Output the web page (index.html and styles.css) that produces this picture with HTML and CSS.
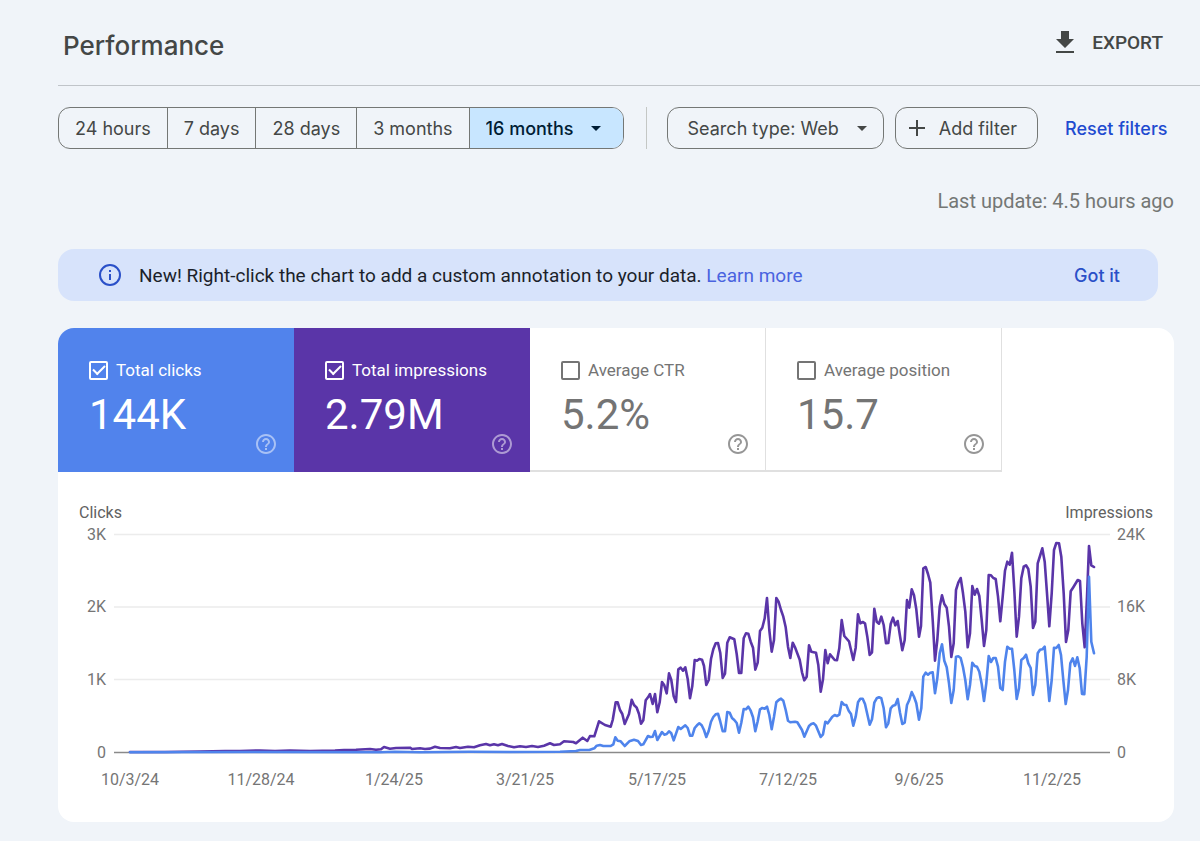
FILE: index.html
```html
<!DOCTYPE html>
<html lang="en">
<head>
  <meta charset="UTF-8">
  <meta name="viewport" content="width=device-width, initial-scale=1">
  <title>Performance</title>
  <link rel="stylesheet" href="styles.css">
</head>
<body>
  <header class="page-header">
    <h1>Performance</h1>
    <button class="export">
      <svg width="20" height="24" viewBox="0 0 20 24" aria-hidden="true">
        <path d="M6 0h8v8h5l-9 9-9-9h5zM1 20h18v2H1z" fill="currentColor"/>
      </svg>
      EXPORT
    </button>
  </header>

  <div class="filters">
    <div class="range">
      <button>24 hours</button>
      <button>7 days</button>
      <button>28 days</button>
      <button>3 months</button>
      <span class="dropdown active">
        <select aria-label="Date range">
          <option>16 months</option>
          <option>12 months</option>
          <option>6 months</option>
        </select>
        <span class="caret"></span>
      </span>
    </div>
    <span class="divider"></span>
    <span class="dropdown search-type">
      <select aria-label="Search type">
        <option>Search type: Web</option>
        <option>Search type: Image</option>
        <option>Search type: Video</option>
      </select>
      <span class="caret"></span>
    </span>
    <button class="add-filter">
      <svg width="16" height="16" viewBox="0 0 16 16" aria-hidden="true">
        <path d="M8 0v16M0 8h16" stroke="currentColor" stroke-width="2"/>
      </svg>
      Add filter
    </button>
    <button class="reset">Reset filters</button>
  </div>

  <p class="updated">Last update: 4.5 hours ago</p>

  <div class="notice">
    <svg width="24" height="24" viewBox="0 0 24 24" aria-hidden="true">
      <circle cx="12" cy="12" r="10" fill="none" stroke="currentColor" stroke-width="2"/>
      <path d="M11 7h2v2h-2zM11 11h2v6h-2z" fill="currentColor"/>
    </svg>
    <p>New! Right-click the chart to add a custom annotation to your data. <a href="#">Learn more</a></p>
    <button>Got it</button>
  </div>

  <main class="panel">
    <svg class="defs" width="0" height="0" aria-hidden="true">
      <symbol id="help" viewBox="0 0 24 24">
        <path fill="currentColor" d="M11 18h2v-2h-2v2zm1-16C6.48 2 2 6.48 2 12s4.48 10 10 10 10-4.48 10-10S17.52 2 12 2zm0 18c-4.41 0-8-3.59-8-8s3.59-8 8-8 8 3.59 8 8-3.59 8-8 8zm0-14c-2.21 0-4 1.79-4 4h2c0-1.1.9-2 2-2s2 .9 2 2c0 2-3 1.75-3 5h2c0-2.25 3-2.5 3-5 0-2.21-1.79-4-4-4z"/>
      </symbol>
    </svg>

    <div class="metrics">
      <div class="metric clicks">
        <label><input type="checkbox" checked>Total clicks</label>
        <div class="value">144K</div>
        <svg class="help"><use href="#help"/></svg>
      </div>
      <div class="metric impressions">
        <label><input type="checkbox" checked>Total impressions</label>
        <div class="value">2.79M</div>
        <svg class="help"><use href="#help"/></svg>
      </div>
      <div class="metric">
        <label><input type="checkbox">Average CTR</label>
        <div class="value">5.2%</div>
        <svg class="help"><use href="#help"/></svg>
      </div>
      <div class="metric">
        <label><input type="checkbox">Average position</label>
        <div class="value">15.7</div>
        <svg class="help"><use href="#help"/></svg>
      </div>
    </div>

    <svg class="chart" viewBox="58 472 1116 350" role="img" aria-label="Clicks and impressions over 16 months">
      <g class="grid">
        <path d="M114 534.5H1110M114 607H1110M114 679.5H1110"/>
        <path class="base" d="M114 752.5H1110"/>
      </g>
      <g class="title">
        <text x="79" y="518">Clicks</text>
        <text x="1153" y="518" text-anchor="end">Impressions</text>
      </g>
      <g text-anchor="end">
        <text x="106" y="540">3K</text>
        <text x="106" y="612">2K</text>
        <text x="106" y="685">1K</text>
        <text x="106" y="758">0</text>
      </g>
      <g>
        <text x="1117" y="540">24K</text>
        <text x="1117" y="612">16K</text>
        <text x="1117" y="685">8K</text>
        <text x="1117" y="758">0</text>
      </g>
      <g text-anchor="middle">
        <text x="130" y="785">10/3/24</text>
        <text x="261" y="785">11/28/24</text>
        <text x="394" y="785">1/24/25</text>
        <text x="525" y="785">3/21/25</text>
        <text x="657" y="785">5/17/25</text>
        <text x="788" y="785">7/12/25</text>
        <text x="919" y="785">9/6/25</text>
        <text x="1052" y="785">11/2/25</text>
      </g>
      <polyline class="line-impressions" points="130,752 165,752 200,751.5 225,751 240,751 260,750.5 275,751 290,750.5 310,751 335,750.5 344,750 356,749.7 370,749 376,749.7 381,749.3 384,747 390,748.7 396,748 410,747.7 412,749 420,748.3 425,749 430,748.6 435,746.7 440,748 450,748.3 456,747 460,748 468,746.7 474,747.3 480,745.3 486,744 490,745.3 494,744.3 498,745.3 502,744 508,746 514,747.3 520,746.3 526,747 532,746 538,747 544,745.7 550,743.3 554,745 560,744.3
        564,741.3 573.3,742 576,743.3 582.7,737.7 587.3,741 590,736 594.3,736.3 599,721.3 605,725 610.7,726.7 612.7,720 615.7,702.3 617.7,702.3 620,710 622.3,714 624.7,724 629,714 631.7,699.7 634,705 636.7,707.7 639,714 641,723.7 643.3,720.3 645.7,700.3 648,697.3 650,694 652.7,704 655,694 657.3,712.3 659.7,702.3 662,682 664.3,685.3 666.7,693.3 669,673.3 671.3,680 673.7,696.3 676,702 678.3,669.3 680.7,667.7 683,670.7 685.3,667.3 687.7,679 690,698.3 692.3,686 694.7,660 697,660.7 699.3,659 702,659.7 704,666 706.3,685 708.7,680 711,659 713.3,649.3 715.7,643.3 718,643 720.3,653 722.7,678 725,673.7 727.3,642.7 729.7,637.3 734.3,639.3 736.7,654 739,673 741.3,673
        743.7,638.3 746,633.3 748.3,633.7 750.7,641.7 753,647.7 755.3,669.7 757.7,662.7 760,631 762.3,627.7 764.7,618.3 767,598 769.3,630 771.7,651.7 774,640 776.3,598 778.7,602 781,610 783.3,616.7 785.7,627.3 788,646.7 790.3,658 792.7,642.7 795,647.3 799.7,659.7 802,672.3 804.3,680.3 806.7,676.7 809,645.3 811.3,651.7 816,652.7 818.3,665 820.7,691.7 823,679.3 825.3,650 827.7,663.3 830,654.3 834.7,660 837,660.3 839.3,648.3 841.7,620 844.3,636 849,641.3 853.3,660 855.7,647.7 858,614.3 860.3,623.3 862.7,622 865,623.3 867.3,636.7 869.7,655 872,652.3 874.3,608.7 876.7,621.7 879,623.7 881.3,616.7 883.7,625 886,643.3 888.3,643
        890.7,624 893,617.7 895.3,625.3 897.7,621 900,636 902.3,650.3 904.7,640 907,600 909.3,607.7 911.7,589.3 914,595.3 916.3,609.3 919,636.7 921,626 923.3,568.3 925.7,567 928,574 930.3,582.7 932.7,620 935,660.7 937.3,640 939.7,606.7 942,595.3 944.3,604 946.7,607.7 949,626.7 951.3,657 953.7,643.3 956,590 958.3,582.7 960.7,578 963,593.3 965.3,611.7 967.7,647.3 970,633.3 972.3,586 974.7,594.7 977,589 979.3,596 981.7,620 984,646 986.3,630 988.7,575 991,575.3 993.3,578 995.7,579
        998,596.7 1000.3,621.3 1002.7,596.7 1005,570.7 1007.3,561.7 1009.7,564.7 1012,552.7 1014.3,590 1016.7,636.7 1019,616.7 1021.3,578.3 1023.7,566.7 1026,565.3 1028.3,569 1030.7,586.7 1033,628 1035.3,621.7 1037.7,563.3 1040,556 1042.3,548.3 1044.7,561.7 1047,593.3 1049.3,626.3 1051.7,593.3 1054,550 1056.3,543 1059,543.3 1061.3,556.7 1063.7,593.3 1066,642 1068.3,630 1070.7,591.3 1073,587.7 1077.7,580 1080,581 1082.3,623.3 1084.7,647.3 1087,596.7 1089,546 1091.3,565.3 1094,567"/>
      <polyline class="line-clicks" points="130,752.3 250,752 380,752.3 395,751.7 420,752.3 470,751.7 510,752 560,751.7
        576,751 580,750 589.3,750 594.3,748.3 596.7,745.7 600,745 603.3,746 610.7,746 613.3,744.3 615.3,737.3 617.7,740.7 620.7,741.3 624.7,746 629.3,741.3 634,739.7 638,741 641,745 643.3,744.3 648,736 650.3,737 652.7,736.7 655,731 657.3,740 662,732 664.3,734.7 666.7,734 669,731.3 671.3,733.3 673.7,740.3 678.3,727 680.7,729 685.3,725.3 687.7,728 690,735.7 692.3,735.7 694.7,728 697,725.3 699.3,723.3 701.7,725.3 704,730 706.3,737 708.7,731 711,721.7 713.3,717 715.7,714.3 718,713.7 720.3,721.7 722.7,731.3 725,731.3 727.3,712 729.7,712.7 732,718 734.3,720 736.7,723 739,732.7 741.3,722.7 743.7,709 746,709.3 748.3,706.7 750.7,710.7 753,717.3 755.3,731.3 757.7,721.3 760,709.3
        762.3,708 764.7,708.7 767,706.7 769.3,715 771.7,729.3 774,716.7 776.3,702.3 778.7,700 781,698.7 783.3,700.7 785.7,710 788,720.7 790.3,722.3 795,721.7 797.3,722.3 802,730 804.3,736.7 809,726 811.3,724 813.7,723.3 816,725.7 820.7,737 823,734.3 825.3,721.7 827.7,723.3 832.3,716.7 834.7,715 837,716 839.3,714.7 841.7,702 844,704.7 846.3,705 848.7,710.7 851,714 853.3,725.7 855.7,716.7 858,702.3 860.3,698.7 862.7,698.7 865,704 869.7,724.7 872,719.3 874.3,702.7 876.7,698.3 879,697.3 881.3,698.3 883.7,708.3 886,727.3 888.3,723.3
        890.7,708.3 893,705.7 895.3,705 897.7,699 900,712.7 902.3,724 904.7,722.7 907,705 909.3,700 911.7,692 914,696.7 916.3,703.3 919,719.7 921.3,708.3 923.3,676.7 925.7,672.7 928,674.7 930.3,672.7 932.7,672.3 935,693.3 937.3,678.3 939.7,653.3 942,644.3 944.3,660.7 946.7,667.3 949,683.3 951.3,703 953.7,690 956,656.7 958.3,656.3 960.7,658 963,667.3 965.3,680 967.7,699.3 970,685 972.3,662.7 974.7,666 977,666.7 979.3,671.7 981.7,684 984,701 986.3,683.3 988.7,656 991,662 993.3,658 995.7,658
        998,666.7 1000.3,688 1002.7,690 1005,661.7 1007.3,646.7 1009.7,648.7 1012,648.7 1014.3,670 1016.7,699 1019,688.3 1021.3,660 1023.7,658 1026,654.7 1028.3,663.3 1030.7,668 1033,695 1035.3,685 1037.7,653.3 1040,649.7 1042.3,649.3 1044.7,646.7 1047,673.3 1049.3,701 1051.7,680 1054,647.7 1056.3,648 1058.7,645 1061,655 1063.3,680 1065.7,704 1068,690 1070.3,663.3 1072.7,658.3 1075,666 1077.3,657.3 1079.7,668.3 1082,694 1084.3,694.3 1086.7,656.7 1089,576.7 1091.3,641.7 1094,653.3"/>
    </svg>
  </main>
</body>
</html>
```
FILE: styles.css
```css
* {
  margin: 0;
  padding: 0;
  box-sizing: border-box;
}

body {
  background-color: #f0f4f9;
  color: #444746;
  font-family: Roboto, sans-serif;
  padding: 0 26px 18px 58px;
}

button,
select {
  font: inherit;
  color: inherit;
  background: none;
  border: none;
  cursor: pointer;
}

.page-header {
  display: flex;
  align-items: center;
  justify-content: space-between;
  height: 86px;
  margin-right: -26px;
  padding: 0 37px 0 5px;
  border-bottom: 1px solid #c0c4c9;
}

h1 {
  font-family: Inter, sans-serif;
  font-size: 26px;
  font-weight: 500;
  line-height: 32px;
  padding-top: 6px;
}

.export {
  display: flex;
  align-items: center;
  gap: 17px;
  font-size: 19px;
  font-weight: 500;
}

.filters {
  display: flex;
  align-items: center;
  height: 42px;
  margin-top: 21px;
  font-family: Inter, sans-serif;
  font-size: 18px;
  white-space: nowrap;
}

.filters > * {
  flex-shrink: 0;
}

.range {
  display: flex;
  height: 42px;
  border: 1px solid #747775;
  border-radius: 12px;
  overflow: hidden;
}

.range button {
  padding: 0 16px;
  border-right: 1px solid #747775;
}

.dropdown {
  position: relative;
  display: flex;
}

.dropdown select {
  appearance: none;
  field-sizing: content;
  padding: 0 49px 0 16px;
}

.active {
  background-color: #c8e6ff;
  color: #001d35;
  font-weight: 500;
}

.caret {
  position: absolute;
  top: 50%;
  right: 22px;
  margin-top: -2px;
  border: 5px solid transparent;
  border-top-color: currentColor;
  border-bottom: none;
  pointer-events: none;
}

.divider {
  width: 1px;
  height: 42px;
  margin: 0 20px 0 22px;
  background-color: #c4c7c5;
}

.search-type,
.add-filter {
  height: 42px;
  border: 1px solid #747775;
  border-radius: 12px;
}

.search-type select {
  padding: 0 44px 0 20px;
}

.search-type .caret {
  right: 16px;
}

.add-filter {
  display: flex;
  align-items: center;
  gap: 14px;
  margin-left: 11px;
  padding: 0 20px 0 13px;
}

.reset {
  margin-left: 27px;
  font-weight: 500;
  color: #1f4bd0;
}

.updated {
  margin-top: 40px;
  font-size: 20px;
  line-height: 24px;
  text-align: right;
  color: #747775;
}

.notice {
  display: flex;
  align-items: center;
  height: 52px;
  margin: 36px 16px 0 0;
  padding: 0 38px 0 40px;
  border-radius: 16px;
  background-color: #d7e3fb;
  color: #2a50c8;
}

.notice p {
  flex: 1;
  margin-left: 17px;
  font-size: 19px;
  color: #1b1f2a;
}

.notice a {
  color: #4a63e0;
  text-decoration: none;
}

.notice button {
  font-family: Inter, sans-serif;
  font-size: 18px;
  font-weight: 500;
}

.panel {
  margin-top: 27px;
  border-radius: 16px;
  background-color: #fff;
  overflow: hidden;
}

.defs {
  display: none;
}

.metrics {
  display: flex;
}

.metric {
  position: relative;
  width: 236px;
  height: 144px;
  padding: 31px 0 0 31px;
  border: solid #e0e0e0;
  border-width: 0 1px 2px 0;
  color: #747474;
}

.metric label {
  display: flex;
  align-items: center;
  gap: 8px;
  font-size: 17px;
  line-height: 22px;
}

.metric input {
  appearance: none;
  display: grid;
  place-content: center;
  width: 19px;
  height: 19px;
  border: 2px solid currentColor;
  border-radius: 2px;
  color: inherit;
}

.metric input:checked::after {
  content: "";
  width: 10px;
  height: 5px;
  margin-bottom: 3px;
  border: solid currentColor;
  border-width: 0 0 2px 2px;
  transform: rotate(-45deg);
}

.value {
  margin-top: 10px;
  font-size: 42px;
  line-height: 48px;
}

.help {
  position: absolute;
  right: 15px;
  bottom: 14px;
  width: 24px;
  height: 24px;
  opacity: 0.75;
}

.clicks,
.impressions {
  border-color: transparent;
  color: #fff;
}

.clicks {
  background-color: #5183ec;
}

.impressions {
  background-color: #5a35a8;
}

.clicks .help,
.impressions .help {
  opacity: 0.5;
}

.chart {
  display: block;
  width: 100%;
  font-size: 16px;
  fill: #757575;
}

.title {
  fill: #616161;
}

.grid path {
  stroke: #ececec;
  stroke-width: 1.5;
}

.grid .base {
  stroke: #8a8a8a;
}

polyline {
  fill: none;
  stroke-width: 2.6;
  stroke-linejoin: round;
  stroke-linecap: round;
}

.line-impressions {
  stroke: #5a35a8;
}

.line-clicks {
  stroke: #4f84ec;
}
```
